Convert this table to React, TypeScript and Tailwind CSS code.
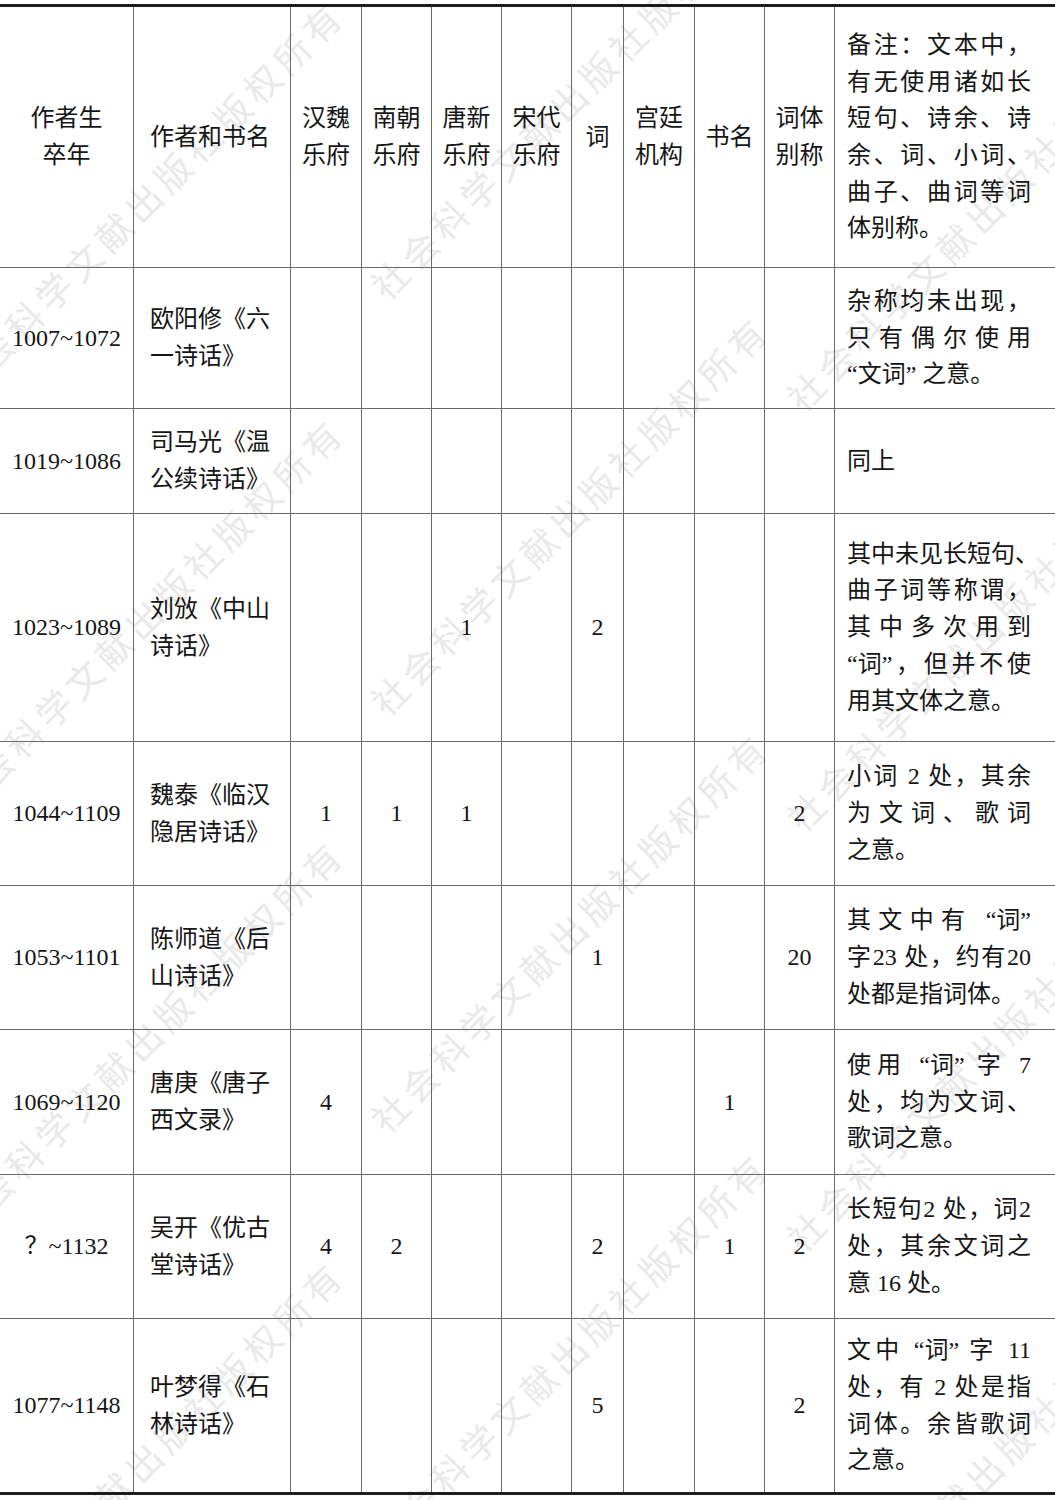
import React from "react";

const GRID =
  "grid grid-cols-[134px_157px_71px_70px_70px_70px_52px_71px_70px_70px_220px]";

type RowData = {
  h: string;
  year: string;
  name: string[];
  nums: string[];
  remark: string[];
};

const rows: RowData[] = [
  {
    h: "h-[141px]",
    year: "1007~1072",
    name: ["欧阳修《六", "一诗话》"],
    nums: ["", "", "", "", "", "", "", ""],
    remark: ["杂称均未出现，", "只有偶尔使用", "“文词” 之意。"],
  },
  {
    h: "h-[105px]",
    year: "1019~1086",
    name: ["司马光《温", "公续诗话》"],
    nums: ["", "", "", "", "", "", "", ""],
    remark: ["同上"],
  },
  {
    h: "h-[228px]",
    year: "1023~1089",
    name: ["刘攽《中山", "诗话》"],
    nums: ["", "", "1", "", "2", "", "", ""],
    remark: [
      "其中未见长短句、",
      "曲子词等称谓，",
      "其中多次用到",
      "“词”，但并不使",
      "用其文体之意。",
    ],
  },
  {
    h: "h-[144px]",
    year: "1044~1109",
    name: ["魏泰《临汉", "隐居诗话》"],
    nums: ["1", "1", "1", "", "", "", "", "2"],
    remark: ["小词 2 处，其余", "为文词、歌词", "之意。"],
  },
  {
    h: "h-[144px]",
    year: "1053~1101",
    name: ["陈师道《后", "山诗话》"],
    nums: ["", "", "", "", "1", "", "", "20"],
    remark: ["其文中有 “词”", "字23 处，约有20", "处都是指词体。"],
  },
  {
    h: "h-[145px]",
    year: "1069~1120",
    name: ["唐庚《唐子", "西文录》"],
    nums: ["4", "", "", "", "", "", "1", ""],
    remark: ["使用 “词” 字 7", "处，均为文词、", "歌词之意。"],
  },
  {
    h: "h-[144px]",
    year: "？~1132",
    name: ["吴开《优古", "堂诗话》"],
    nums: ["4", "2", "", "", "2", "", "1", "2"],
    remark: ["长短句2 处，词2", "处，其余文词之", "意 16 处。"],
  },
  {
    h: "h-[173px]",
    year: "1077~1148",
    name: ["叶梦得《石", "林诗话》"],
    nums: ["", "", "", "", "5", "", "", "2"],
    remark: ["文中 “词” 字 11", "处，有 2 处是指", "词体。余皆歌词", "之意。"],
  },
];

const headerCols: string[][] = [
  ["汉魏", "乐府"],
  ["南朝", "乐府"],
  ["唐新", "乐府"],
  ["宋代", "乐府"],
  ["词"],
  ["宫廷", "机构"],
  ["书名"],
  ["词体", "别称"],
];

const headerRemark = [
  "备注：文本中，",
  "有无使用诸如长",
  "短句、诗余、诗",
  "余、词、小词、",
  "曲子、曲词等词",
  "体别称。",
];

const WM_TEXT = "社会科学文献出版社版权所有";
// centre of the last glyph ("有") of each diagonal watermark band
const marks: [number, number][] = [
  [320, 23],
  [320, 440],
  [320, 862],
  [320, 1283],
  [745, -78],
  [745, 338],
  [745, 755],
  [745, 1175],
  [1161, 34],
  [1161, 454],
  [1161, 874],
  [1161, 1294],
];

function renderLine(l: string) {
  const parts = l.split(/(“[^”]*”)/);
  return parts.map((p, i) =>
    p.startsWith("“") ? (
      <span key={i} className="inline-block">
        {p}
      </span>
    ) : (
      <React.Fragment key={i}>{p}</React.Fragment>
    )
  );
}

function Remark({ lines }: { lines: string[] }) {
  return (
    <div className="flex h-full items-center pl-[12px] pr-[24px]">
      <div className="w-full">
        {lines.map((l, i) => (
          <div
            key={i}
            className={
              i < lines.length - 1
                ? "whitespace-nowrap text-justify [text-align-last:justify]"
                : "whitespace-nowrap text-left"
            }
          >
            {renderLine(l)}
          </div>
        ))}
      </div>
    </div>
  );
}

function Cell({
  children,
  align = "center",
}: {
  children?: React.ReactNode;
  align?: "center" | "left";
}) {
  return (
    <div
      className={
        "border-r border-[#6a6a6a] " +
        (align === "center"
          ? "flex h-full flex-col items-center justify-center text-center"
          : "flex h-full flex-col items-start justify-center pl-4 text-left")
      }
    >
      {children}
    </div>
  );
}

export default function App() {
  return (
    <div className="relative h-[1500px] w-[1055px] overflow-hidden bg-white font-['Liberation_Serif','Noto_Sans_CJK_SC',serif] text-[24px] leading-[36.7px] text-[#151515]">
      <div className="pointer-events-none absolute inset-0 z-0">
        {marks.map(([x, y], i) => (
          <div
            key={i}
            className="absolute w-[546px] whitespace-nowrap font-['Noto_Sans_CJK_SC',sans-serif] text-[36px] leading-[50px] tracking-[6px] text-[#e9e9e9]"
            style={{
              left: x - 522,
              top: y - 25,
              transform: "rotate(-45deg)",
              transformOrigin: "522px 25px",
            }}
          >
            {WM_TEXT}
          </div>
        ))}
      </div>

      <div className="relative z-10 mt-[4px] border-y-[3px] border-[#1c1c1c]">
        <div className={GRID + " h-[261px] border-b border-[#6a6a6a]"}>
          <Cell>
            <div>作者生</div>
            <div>卒年</div>
          </Cell>
          <Cell align="left">
            <div>作者和书名</div>
          </Cell>
          {headerCols.map((c, i) => (
            <Cell key={i}>
              {c.map((t, j) => (
                <div key={j}>{t}</div>
              ))}
            </Cell>
          ))}
          <Remark lines={headerRemark} />
        </div>

        {rows.map((r, ri) => (
          <div
            key={ri}
            className={
              GRID +
              " " +
              r.h +
              (ri < rows.length - 1 ? " border-b border-[#6a6a6a]" : "")
            }
          >
            <Cell>
              <div className="whitespace-nowrap">{r.year}</div>
            </Cell>
            <Cell align="left">
              {r.name.map((t, j) => (
                <div key={j} className="whitespace-nowrap">
                  {t}
                </div>
              ))}
            </Cell>
            {r.nums.map((n, j) => (
              <Cell key={j}>
                <div>{n}</div>
              </Cell>
            ))}
            <Remark lines={r.remark} />
          </div>
        ))}
      </div>
    </div>
  );
}
